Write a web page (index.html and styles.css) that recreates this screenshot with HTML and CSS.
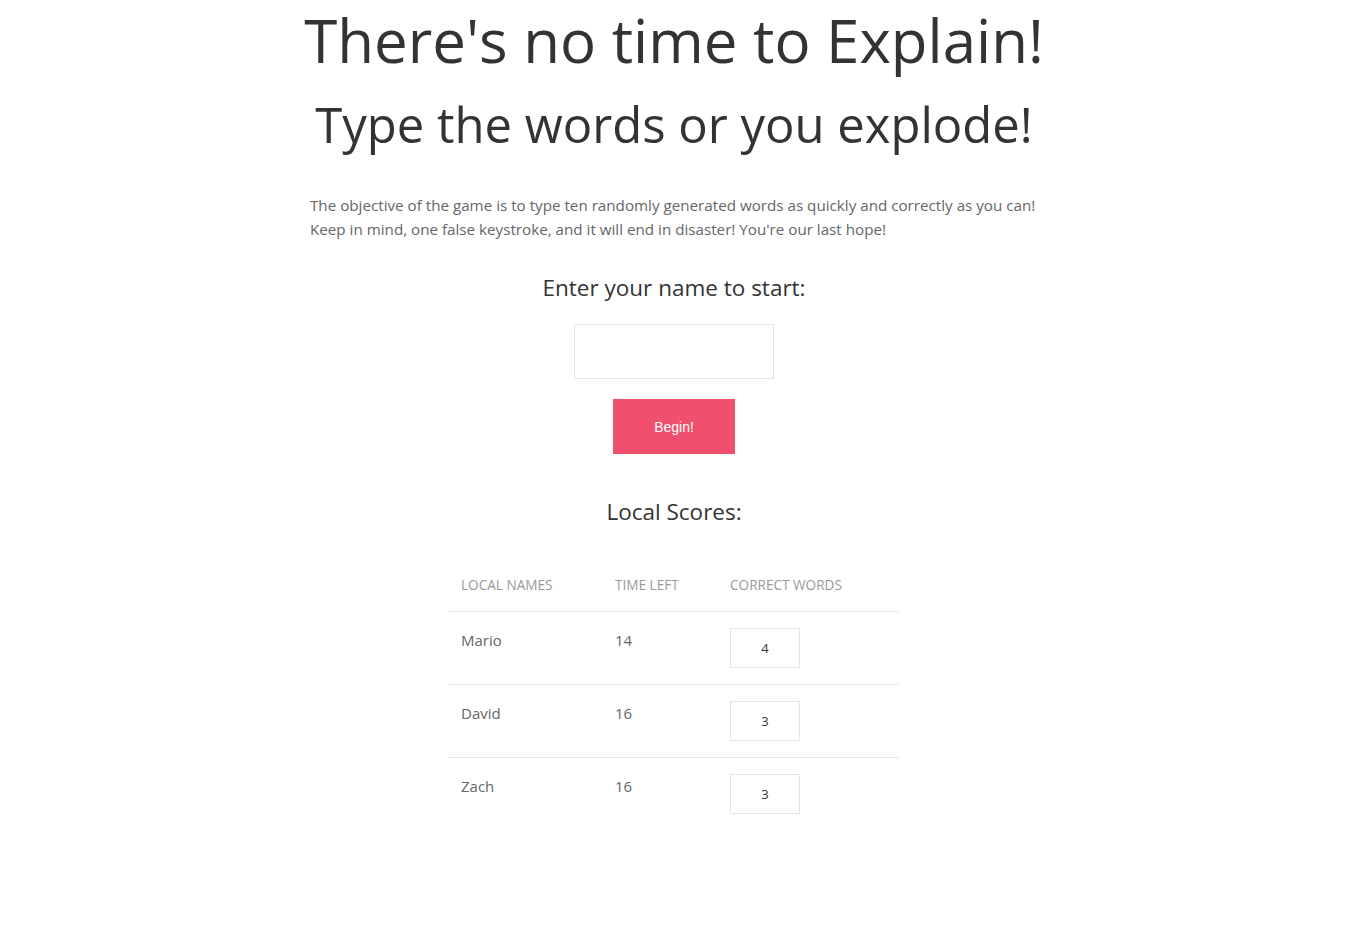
FILE: index.html
```html
<!DOCTYPE html>
<html lang="en">
<head>
<meta charset="utf-8">
<title>There's no time to Explain!</title>
<link rel="stylesheet" href="styles.css">
</head>
<body>
<main class="page">
  <h1 class="title">There's no time to Explain!</h1>
  <h2 class="subtitle">Type the words or you explode!</h2>
  <p class="intro">The objective of the game is to type ten randomly generated words as quickly and correctly as you can!<br>Keep in mind, one false keystroke, and it will end in disaster! You're our last hope!</p>
  <h3 class="prompt">Enter your name to start:</h3>
  <div class="start">
    <input class="name-input" type="text">
    <button class="begin" type="button">Begin!</button>
  </div>
  <h3 class="prompt scores-title">Local Scores:</h3>
  <table class="scores">
    <thead>
      <tr><th class="c1">Local Names</th><th class="c2">Time Left</th><th class="c3">Correct Words</th></tr>
    </thead>
    <tbody>
      <tr><td>Mario</td><td>14</td><td><span class="score-box">4</span></td></tr>
      <tr><td>David</td><td>16</td><td><span class="score-box">3</span></td></tr>
      <tr><td>Zach</td><td>16</td><td><span class="score-box">3</span></td></tr>
    </tbody>
  </table>
</main>
</body>
</html>
```
FILE: styles.css
```css
* { box-sizing: border-box; }
html, body { margin: 0; padding: 0; background: #fff; }
body {
  font-family: "Open Sans", "Noto Sans", sans-serif;
  color: #666;
}
.page {
  width: 100%;
  display: flex;
  flex-direction: column;
  align-items: center;
}
.title {
  margin: 0;
  font-size: 60px;
  font-weight: 400;
  line-height: 80px;
  color: #333;
  white-space: nowrap;
}
.subtitle {
  margin: 0;
  font-size: 49px;
  font-weight: 400;
  line-height: 88px;
  color: #333;
  white-space: nowrap;
}
.intro {
  width: 728px;
  margin: 25px 0 0;
  font-size: 15.2px;
  line-height: 24px;
  color: #666;
  white-space: nowrap;
}
.prompt {
  margin: 31px 0 0;
  font-size: 22.5px;
  font-weight: 400;
  line-height: 32px;
  color: #333;
}
.start {
  margin-top: 20px;
  display: flex;
  flex-direction: column;
  align-items: center;
  gap: 20px;
}
.name-input {
  width: 200px;
  height: 55px;
  border: 1px solid #e5e5e5;
  background: #fff;
  padding: 0 10px;
  outline: none;
}
.begin {
  width: 122px;
  height: 55px;
  border: none;
  background: #f0506e;
  color: #fff;
  font-family: "Liberation Sans", Arial, sans-serif;
  font-size: 14px;
  cursor: pointer;
}
.scores-title { margin-top: 42px; }
.scores {
  margin-top: 27px;
  width: 450px;
  border-collapse: collapse;
}
.scores th {
  text-align: left;
  font-weight: 400;
  font-size: 13.6px;
  text-transform: uppercase;
  color: #999;
  padding: 18px 12px 14px;
  line-height: 24px;
  border-bottom: 1px solid #e5e5e5;
}
.scores .c1 { width: 154px; }
.scores .c2 { width: 115px; }
.scores td {
  vertical-align: top;
  padding: 16px 12px;
  font-size: 15px;
  line-height: 24px;
  color: #666;
}
.scores tbody tr + tr td { border-top: 1px solid #e5e5e5; }
.score-box {
  display: flex;
  align-items: center;
  justify-content: center;
  width: 70px;
  height: 40px;
  border: 1px solid #e5e5e5;
  font-size: 13px;
  color: #333;
}
```
